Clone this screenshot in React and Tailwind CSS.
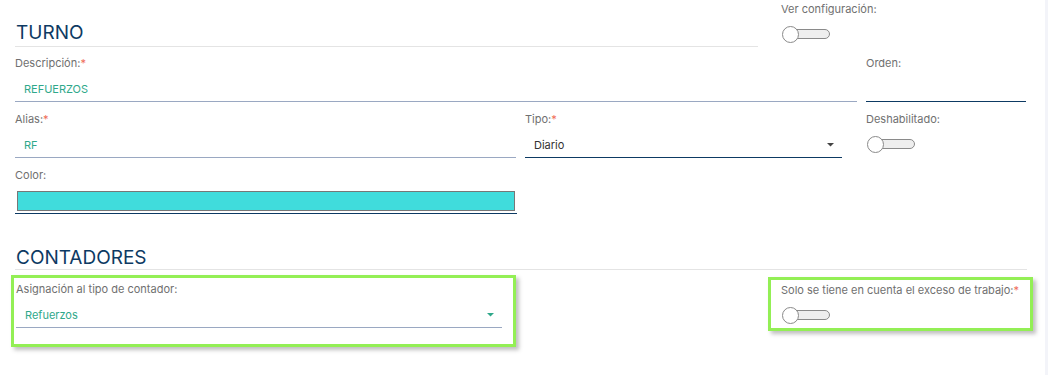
import React from 'react';

const Req = () => <span className="text-[#ef6b57]">*</span>;

const Label = ({ children, req }) => (
  <div className="h-[16px] text-[11px] leading-[16px] text-[#707070] whitespace-nowrap">
    {children}
    {req && <Req />}
  </div>
);

const Caret = ({ color }) => (
  <svg width="7" height="4" viewBox="0 0 7 4" className="shrink-0 mb-[5px]">
    <path d="M0 0 L7 0 L3.5 3.5 Z" fill={color} />
  </svg>
);

const Toggle = () => (
  <div className="relative w-[48px] h-[17px]">
    <div className="absolute left-[8px] right-0 top-[3px] h-[10px] rounded-full border border-[#8a8a8a] bg-[#eeeeee]" />
    <div className="absolute left-0 top-0 w-[17px] h-[17px] rounded-full border border-[#8a8a8a] bg-white" />
  </div>
);

const Field = ({ label, req, value, valueClass = 'text-[#2fa88a]', line = 'border-[#9aa8c2]', caret, caretColor, className = '' }) => (
  <div className={className}>
    <Label req={req}>{label}</Label>
    <div className={`h-[31px] flex items-end justify-between pl-[9px] pr-[8px] pb-[5px] border-b ${line}`}>
      <span className={`text-[11px] leading-[14px] ${valueClass}`}>{value}</span>
      {caret && <Caret color={caretColor} />}
    </div>
  </div>
);

export default function App() {
  return (
    <div className="w-[1048px] h-[375px] bg-white flex overflow-hidden" style={{ fontFamily: 'Inter, "Noto Sans", sans-serif' }}>
      <div className="flex-1 pl-[15px]">
        {/* TURNO */}
        <div className="flex">
          <div className="w-[743px] h-[47px] flex items-end border-b border-[#e4e4e4]">
            <h2 className="text-[19px] leading-[19px] pb-[4px] pl-[1px] text-[#0d3a63]">TURNO</h2>
          </div>
          <div className="ml-[23px] pt-[1px]">
            <Label>Ver configuración:</Label>
            <div className="mt-[9px] ml-[1px]"><Toggle /></div>
          </div>
        </div>

        <div className="flex mt-[8px]">
          <Field className="w-[842px]" label="Descripción:" req value="REFUERZOS" />
          <Field className="w-[160px] ml-[9px]" label="Orden:" value="" line="border-[#0d3a63]" />
        </div>

        <div className="flex mt-[9px]">
          <Field className="w-[501px]" label="Alias:" req value="RF" />
          <Field className="w-[317px] ml-[9px]" label="Tipo:" req value="Diario" valueClass="text-[#333333]" line="border-[#0d3a63]" caret caretColor="#444444" />
          <div className="ml-[24px]">
            <Label>Deshabilitado:</Label>
            <div className="mt-[9px] ml-[1px]"><Toggle /></div>
          </div>
        </div>

        <div className="w-[502px] mt-[9px]">
          <Label>Color:</Label>
          <div className="h-[31px] pt-[8px] pl-[2px] border-b border-[#0d3a63]">
            <div className="w-[498px] h-[20px] bg-[#40dcdc] border border-[#777777]" />
          </div>
        </div>

        {/* CONTADORES */}
        <div className="w-[1012px] h-[56px] flex items-end border-b border-[#e4e4e4]">
          <h2 className="text-[19px] leading-[19px] pb-[2px] pl-[1px] text-[#0d3a63]">CONTADORES</h2>
        </div>

        <div className="flex items-start mt-[5px]">
          <div className="-ml-[4px] w-[505px] h-[72px] border-[3px] border-[#93ef55] shadow-[3px_3px_4px_rgba(0,0,0,0.25)] pl-[2px] pr-[11px] pt-[3px]">
            <Field label="Asignación al tipo de contador:" value="Refuerzos" caret caretColor="#2fa88a" />
          </div>
          <div className="ml-[252px] mt-[2px] w-[265px] h-[54px] border-[3px] border-[#93ef55] shadow-[3px_3px_4px_rgba(0,0,0,0.25)] pl-[10px] pt-[2px]">
            <Label req>Solo se tiene en cuenta el exceso de trabajo:</Label>
            <div className="mt-[9px] ml-[1px]"><Toggle /></div>
          </div>
        </div>
      </div>
      <div className="w-[3px] bg-[#f3f4f9]" />
    </div>
  );
}
